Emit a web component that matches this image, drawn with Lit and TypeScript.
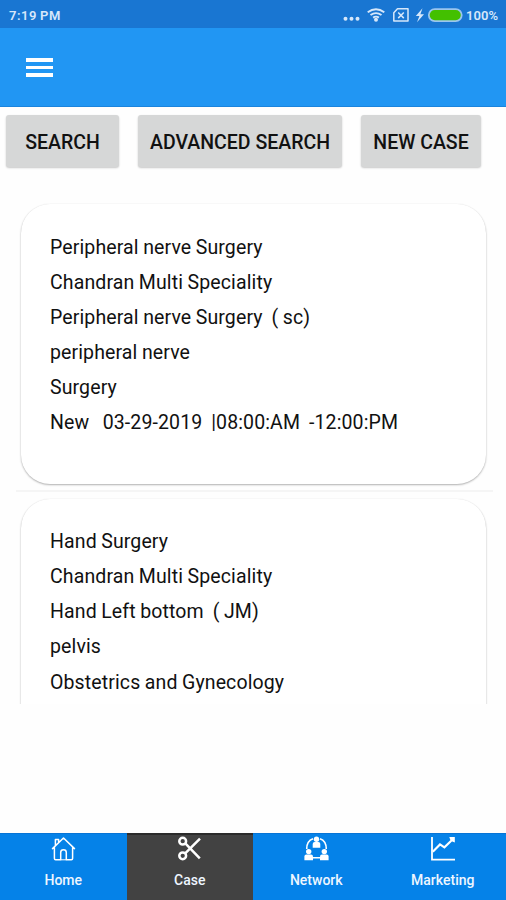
import { LitElement, html, svg, css } from "lit";
import { customElement, property } from "lit/decorators.js";

interface CaseRecord {
  lines: string[];
}

const CASES: CaseRecord[] = [
  {
    lines: [
      "Peripheral nerve Surgery",
      "Chandran Multi Speciality",
      "Peripheral nerve Surgery  ( sc)",
      "peripheral nerve",
      "Surgery",
      "New   03-29-2019  |08:00:AM  -12:00:PM",
    ],
  },
  {
    lines: [
      "Hand Surgery",
      "Chandran Multi Speciality",
      "Hand Left bottom  ( JM)",
      "pelvis",
      "Obstetrics and Gynecology",
    ],
  },
];

const NAV_ICONS: Record<string, unknown> = {
  Home: svg`
    <path d="M1.500 12.600 12.500 2l11 10.600M3.400 11.500v11.100q0 1.200 1.200 1.200h5.100v-7.400q0-2.600 2.800-2.600t2.800 2.600v7.400h5.100q1.200 0 1.200-1.200V11.500M4.400 9.400V3.500h3.200v2.600" stroke-width="1.500" stroke-linejoin="round" stroke-linecap="round"/>
    <path d="M9.700 23.800h5.600" stroke-width="1"/>`,
  Case: svg`
    <circle cx="5.700" cy="5.200" r="3.400" stroke-width="2.500"/>
    <circle cx="5.700" cy="19.800" r="3.400" stroke-width="2.500"/>
    <path d="M8.200 17.400 23 2.600M8.300 7.400 22.800 22.300" stroke-width="2.500"/>`,
  Network: svg`
    <path d="M9 2.800Q2.700 5 2.700 13M16 2.800q6.300 2.200 6.300 10.200M8.500 21.800h8" stroke-width="1.600"/>
    <g fill="#fff" stroke="none">
      <circle cx="12.500" cy="3.300" r="2.700"/><path d="M8.700 11.800V8q0-2 2-2h3.600q2 0 2 2v3.800z"/>
      <circle cx="4.700" cy="15.600" r="2.700"/><path d="M.4 24.300v-3.700q0-2.200 2-2.200h4.600q2 0 2 2.200v3.700z"/>
      <circle cx="20.300" cy="15.600" r="2.700"/><path d="M16 24.300v-3.700q0-2.200 2-2.200h4.600q2 0 2 2.200v3.700z"/>
    </g>`,
  Marketing: svg`
    <path d="M2 1v22.600h23" stroke-width="1.800"/>
    <path d="M2.800 15.800 10 8.400l4.400 2.900 7.600-7.200" stroke-width="2.100"/>
    <path d="M19.300 1h5.500v5.500l-2.500-.9-2.100-2.100z" fill="#fff" stroke="none"/>`,
};

@customElement("status-bar")
export class StatusBar extends LitElement {
  static styles = css`
    :host {
      display: flex;
      align-items: center;
      height: 28px;
      padding: 2px 7px 0 9px;
      box-sizing: border-box;
      background: #1976d2;
      color: #d6e7fa;
      font-size: 13px;
      font-weight: 600;
    }
    .time { flex: 1; letter-spacing: 0.500px; word-spacing: -0.500px; }
    .percent { width: 33px; letter-spacing: 0.100px; white-space: nowrap; }
    svg { display: block; flex: none; }
  `;

  render() {
    return html`
      <span class="time">7:19 PM</span>
      <svg width="123" height="24" viewBox="0 0 123 24" fill="none">
        <g fill="#d6e7fa">
          <circle cx="2.500" cy="15.800" r="2"/><circle cx="8.500" cy="15.800" r="2"/><circle cx="14.500" cy="15.800" r="2"/>
          <circle cx="33" cy="16.700" r="2"/>
        </g>
        <g stroke="#d6e7fa" stroke-width="1.900">
          <path d="M24.700 9.300q8.300-6.200 16.600 0M27.500 12.100q5.500-4 11 0M30.100 14.600q2.900-2 5.800 0"/>
          <path d="M54.500 5.800H65V18H50.800V9.800z" stroke-width="1.500" stroke-linejoin="round"/>
          <path d="m55.200 9.500 5.600 5.600m0-5.600-5.600 5.600" stroke-width="1.500"/>
        </g>
        <path d="M79.500 5.300 72.800 13h3.600L74 19.300l7-8h-3.600z" fill="#d6e7fa"/>
        <rect x="85.800" y="6.100" width="32.900" height="12" rx="6" fill="#43c000" stroke="#9bc5ee" stroke-width="1.800"/>
      </svg>
      <span class="percent">100%</span>
    `;
  }
}

@customElement("case-card")
export class CaseCard extends LitElement {
  @property({ attribute: false }) record!: CaseRecord;

  static styles = css`
    :host {
      display: block;
      height: 280px;
      padding: 25.500px 28px 0 29px;
      box-sizing: border-box;
      border-radius: 29px;
      background: #fff;
      box-shadow: 0 1px 2px rgba(0, 0, 0, 0.3), 0 0 1px rgba(0, 0, 0, 0.08);
    }
    .line {
      height: 35.150px;
      line-height: 35.150px;
      font-size: 19.500px;
      letter-spacing: 0.120px;
      word-spacing: -0.500px;
      white-space: pre;
      color: #111;
    }
  `;

  render() {
    return this.record.lines.map((line) => html`<div class="line">${line}</div>`);
  }
}

@customElement("bottom-nav")
export class BottomNav extends LitElement {
  @property() active = "Case";

  static styles = css`
    :host {
      display: grid;
      grid-template-columns: repeat(4, 1fr);
      height: 67px;
      background: #0582e8;
    }
    .tab {
      display: flex;
      flex-direction: column;
      align-items: center;
      padding-top: 2px;
      box-sizing: border-box;
      border-top: 1px solid #0674d6;
      color: #eef6ff;
      font-size: 14px;
      font-weight: 500;
    }
    .tab.active {
      background: #424242;
      border-top: 2px solid #2b2b2b;
      padding-top: 1px;
    }
    .label { margin-top: 10px; line-height: 18px; }
    svg { display: block; }
  `;

  render() {
    return Object.keys(NAV_ICONS).map(
      (name) => html`
        <div class="tab ${name === this.active ? "active" : ""}">
          <svg width="25" height="25" viewBox="0 0 25 25" fill="none" stroke="#fff">${NAV_ICONS[name]}</svg>
          <span class="label">${name}</span>
        </div>
      `
    );
  }
}

@customElement("app-root")
export class AppRoot extends LitElement {
  static styles = css`
    :host {
      display: flex;
      flex-direction: column;
      height: 900px;
      overflow: hidden;
      background: #fefefe;
      font-family: Roboto, "Liberation Sans", sans-serif;
    }
    .toolbar {
      display: flex;
      align-items: center;
      height: 79px;
      padding: 1px 0 0 26px;
      box-sizing: border-box;
      background: #2196f3;
      border-bottom: 1px solid #1b84dd;
    }
    .menu { display: flex; flex-direction: column; gap: 4px; width: 27px; }
    .bar { height: 3.500px; background: #fff; }
    .actions { display: flex; gap: 19px; padding: 8px 6px 0; }
    .action {
      height: 52px;
      padding: 2px 0 0;
      border: 0;
      border-radius: 3px;
      background: #d6d7d7;
      box-shadow: 0 1px 2px rgba(0, 0, 0, 0.22);
      color: #111;
      font: 500 19.500px/52px Roboto, sans-serif;
      text-align: center;
      white-space: nowrap;
    }
    .search { width: 113px; }
    .advanced { width: 204px; }
    .create { width: 120px; }
    .list {
      height: 501px;
      margin-top: 36px;
      padding: 1px 13px 0 16px;
      box-sizing: border-box;
      overflow: hidden;
    }
    .card { margin: 0 7px 0 5px; }
    .divider { height: 2px; margin: 6px 0 6.500px; background: #f5f5f5; }
    .spacer { flex: 1; }
  `;

  render() {
    return html`
      <status-bar></status-bar>
      <header class="toolbar">
        <div class="menu">
          <div class="bar"></div>
          <div class="bar"></div>
          <div class="bar"></div>
        </div>
      </header>
      <div class="actions">
        <button class="action search">SEARCH</button>
        <button class="action advanced">ADVANCED SEARCH</button>
        <button class="action create">NEW CASE</button>
      </div>
      <main class="list">
        ${CASES.map(
          (record, i) => html`
            ${i > 0 ? html`<div class="divider"></div>` : ""}
            <case-card class="card" .record=${record}></case-card>
          `
        )}
      </main>
      <div class="spacer"></div>
      <bottom-nav active="Case"></bottom-nav>
    `;
  }
}
